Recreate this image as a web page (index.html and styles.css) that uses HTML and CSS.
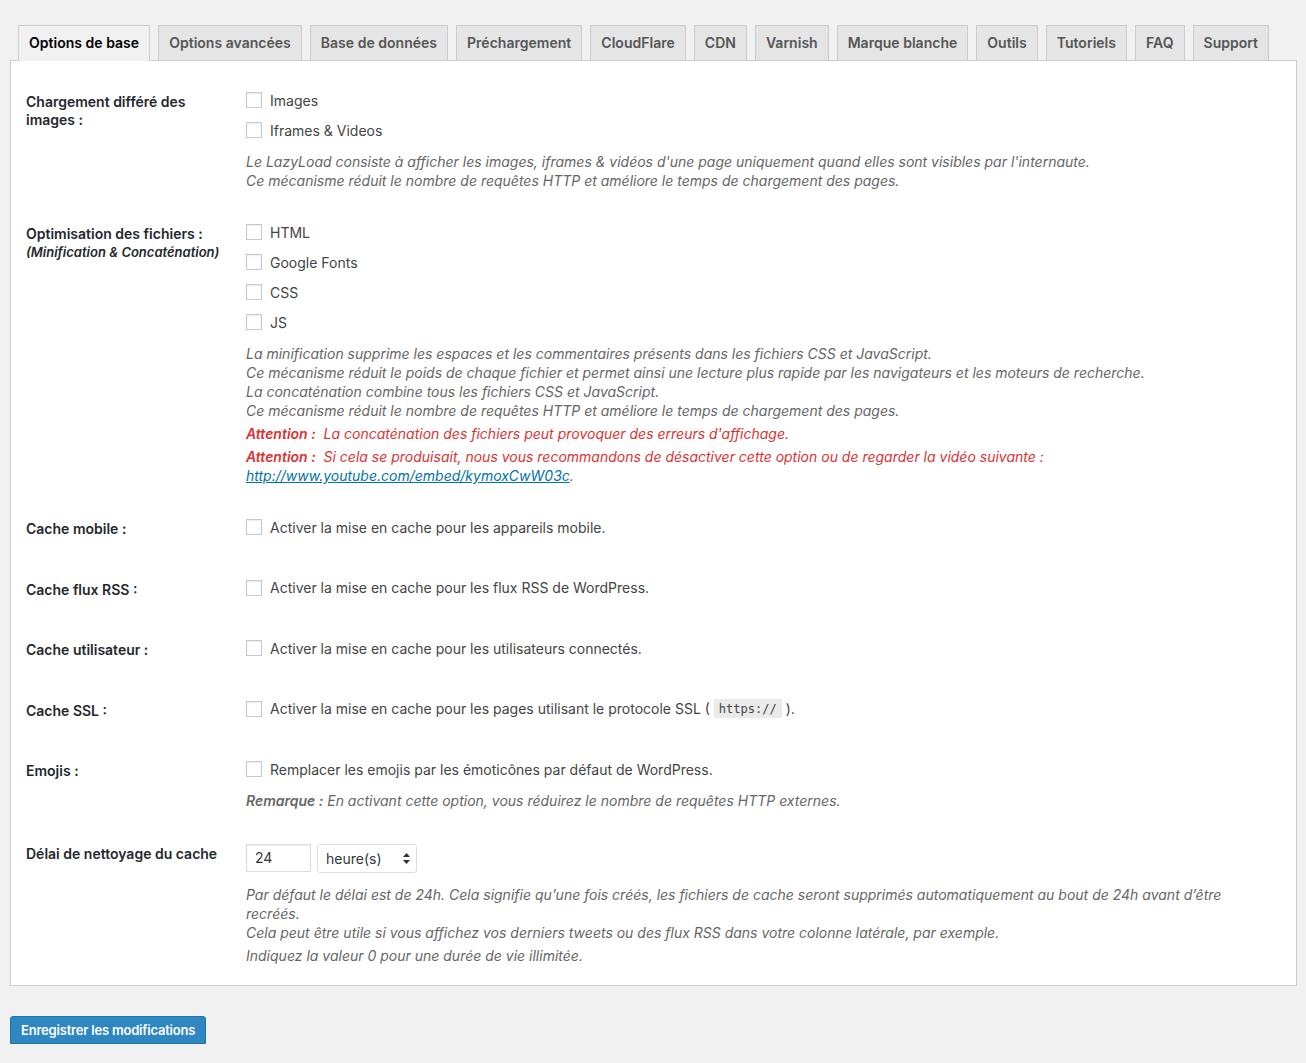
FILE: index.html
```html
<!DOCTYPE html>
<html lang="fr">
<head>
  <meta charset="UTF-8">
  <title>Réglages du cache</title>
  <link rel="stylesheet" href="styles.css">
</head>
<body>

  <nav class="tabs">
    <a class="tab active" href="#">Options de base</a>
    <a class="tab" href="#">Options avancées</a>
    <a class="tab" href="#">Base de données</a>
    <a class="tab" href="#">Préchargement</a>
    <a class="tab" href="#">CloudFlare</a>
    <a class="tab" href="#">CDN</a>
    <a class="tab" href="#">Varnish</a>
    <a class="tab" href="#">Marque blanche</a>
    <a class="tab" href="#">Outils</a>
    <a class="tab" href="#">Tutoriels</a>
    <a class="tab" href="#">FAQ</a>
    <a class="tab" href="#">Support</a>
  </nav>

  <form class="panel">

    <div class="row">
      <div class="th">Chargement différé des images :</div>
      <div class="td">
        <label class="check"><span class="box"></span>Images</label>
        <label class="check"><span class="box"></span>Iframes &amp; Videos</label>
        <p class="description">Le LazyLoad consiste à afficher les images, iframes &amp; vidéos d'une page uniquement quand elles sont visibles par l'internaute.<br>
        Ce mécanisme réduit le nombre de requêtes HTTP et améliore le temps de chargement des pages.</p>
      </div>
    </div>

    <div class="row">
      <div class="th">Optimisation des fichiers :<br><em class="sub">(Minification &amp; Concaténation)</em></div>
      <div class="td">
        <label class="check"><span class="box"></span>HTML</label>
        <label class="check"><span class="box"></span>Google Fonts</label>
        <label class="check"><span class="box"></span>CSS</label>
        <label class="check"><span class="box"></span>JS</label>
        <p class="description">La minification supprime les espaces et les commentaires présents dans les fichiers CSS et JavaScript.<br>
        Ce mécanisme réduit le poids de chaque fichier et permet ainsi une lecture plus rapide par les navigateurs et les moteurs de recherche.<br>
        La concaténation combine tous les fichiers CSS et JavaScript.<br>
        Ce mécanisme réduit le nombre de requêtes HTTP et améliore le temps de chargement des pages.</p>
        <p class="description warning"><strong>Attention :</strong>&nbsp; La concaténation des fichiers peut provoquer des erreurs d'affichage.</p>
        <p class="description warning"><strong>Attention :</strong>&nbsp; Si cela se produisait, nous vous recommandons de désactiver cette option ou de regarder la vidéo suivante :<br>
        <a href="#">http://www.youtube.com/embed/kymoxCwW03c</a>.</p>
      </div>
    </div>

    <div class="row">
      <div class="th">Cache mobile :</div>
      <div class="td">
        <label class="check"><span class="box"></span>Activer la mise en cache pour les appareils mobile.</label>
      </div>
    </div>

    <div class="row">
      <div class="th">Cache flux RSS :</div>
      <div class="td">
        <label class="check"><span class="box"></span>Activer la mise en cache pour les flux RSS de WordPress.</label>
      </div>
    </div>

    <div class="row">
      <div class="th">Cache utilisateur :</div>
      <div class="td">
        <label class="check"><span class="box"></span>Activer la mise en cache pour les utilisateurs connectés.</label>
      </div>
    </div>

    <div class="row">
      <div class="th">Cache SSL :</div>
      <div class="td">
        <label class="check"><span class="box"></span>Activer la mise en cache pour les pages utilisant le protocole SSL (<code>https://</code>).</label>
      </div>
    </div>

    <div class="row">
      <div class="th">Emojis :</div>
      <div class="td">
        <label class="check"><span class="box"></span>Remplacer les emojis par les émoticônes par défaut de WordPress.</label>
        <p class="description"><strong>Remarque :</strong> En activant cette option, vous réduirez le nombre de requêtes HTTP externes.</p>
      </div>
    </div>

    <div class="row">
      <div class="th">Délai de nettoyage du cache</div>
      <div class="td">
        <div class="inline-fields">
          <span class="text-input">24</span>
          <span class="select">heure(s)
            <svg class="arrows" width="7" height="11" viewBox="0 0 7 11"><path d="M3.5 0 L7 4 H0 Z M0 7 H7 L3.5 11 Z" fill="#333"/></svg>
          </span>
        </div>
        <p class="description spaced">Par défaut le délai est de 24h. Cela signifie qu’une fois créés, les fichiers de cache seront supprimés automatiquement au bout de 24h avant d’être recréés.<br>
        Cela peut être utile si vous affichez vos derniers tweets ou des flux RSS dans votre colonne latérale, par exemple.</p>
        <p class="description">Indiquez la valeur 0 pour une durée de vie illimitée.</p>
      </div>
    </div>

  </form>

  <button class="button-primary" type="button">Enregistrer les modifications</button>

</body>
</html>
```

FILE: styles.css
```css
body {
  margin: 0;
  padding: 25px 9px 0 10px;
  background: #f1f1f1;
  color: #444;
  font-family: Inter, "Open Sans", sans-serif;
  font-size: 14px;
}

/* tabs */

.tabs {
  display: flex;
  gap: 8px;
  padding-left: 8px;
  border-bottom: 1px solid #ccc;
}

.tab {
  display: block;
  padding: 5px 10px;
  line-height: 24px;
  font-size: 14px;
  font-weight: 600;
  color: #555;
  text-decoration: none;
  background: #e5e5e5;
  border: 1px solid #ccc;
  margin-bottom: -1px;
  letter-spacing: 0.02px;
}

.tab.active {
  background: #f1f1f1;
  color: #000;
  border-bottom-color: #f1f1f1;
}

/* settings panel */

.panel {
  background: #fff;
  border: 1px solid #ccc;
  border-top: 0;
  padding: 12px 15px 5px;
}

.row {
  display: grid;
  grid-template-columns: 210px 1fr;
  min-height: 60.5px;
}

.th {
  padding: 20px 10px 20px 0;
  font-weight: 600;
  color: #23282d;
  line-height: 18px;
}

.th .sub {
  font-size: 13px;
}

.td {
  padding: 15px 10px;
}

.check {
  display: flex;
  align-items: center;
  height: 24px;
  margin-bottom: 6px;
  color: #444;
}

.box {
  width: 14px;
  height: 14px;
  border: 1px solid #c6cacd;
  box-shadow: inset 0 1px 2px rgba(0, 0, 0, 0.07);
  background: #fff;
  margin-right: 8px;
  flex-shrink: 0;
}

code {
  font-family: "DejaVu Sans Mono", monospace;
  font-size: 12px;
  background: #eaeaea;
  padding: 3px 5px 2px;
  margin: 0 4px;
}

.description {
  margin: 10px 0 0;
  font-style: italic;
  color: #666;
  line-height: 19px;
}

.description + .description {
  margin-top: 4px;
}

.description strong {
  font-weight: 600;
}

.warning {
  color: #dc3232;
}

.warning a {
  color: #0073aa;
}

/* cache lifespan fields */

.inline-fields {
  display: flex;
  gap: 6px;
  padding-top: 4px;
}

.text-input {
  width: 55px;
  height: 26px;
  line-height: 26px;
  padding-left: 8px;
  border: 1px solid #ddd;
  box-shadow: inset 0 1px 2px rgba(0, 0, 0, 0.07);
  color: #32373c;
}

.select {
  display: flex;
  align-items: center;
  justify-content: space-between;
  width: 84px;
  height: 27px;
  padding: 0 6px 0 8px;
  border: 1px solid #ddd;
  border-radius: 3px;
  color: #32373c;
}

.description.spaced {
  margin-top: 12px;
}

/* submit */

.button-primary {
  display: block;
  margin-top: 30px;
  height: 28px;
  padding: 0 10px;
  background: #2f87c2;
  border: 1px solid #2473a8;
  border-radius: 3px;
  color: #fff;
  font-family: Inter, sans-serif;
  font-size: 13px;
  font-weight: 600;
  letter-spacing: -0.2px;
  box-shadow: 0 1px 0 #1f6796;
}
```
